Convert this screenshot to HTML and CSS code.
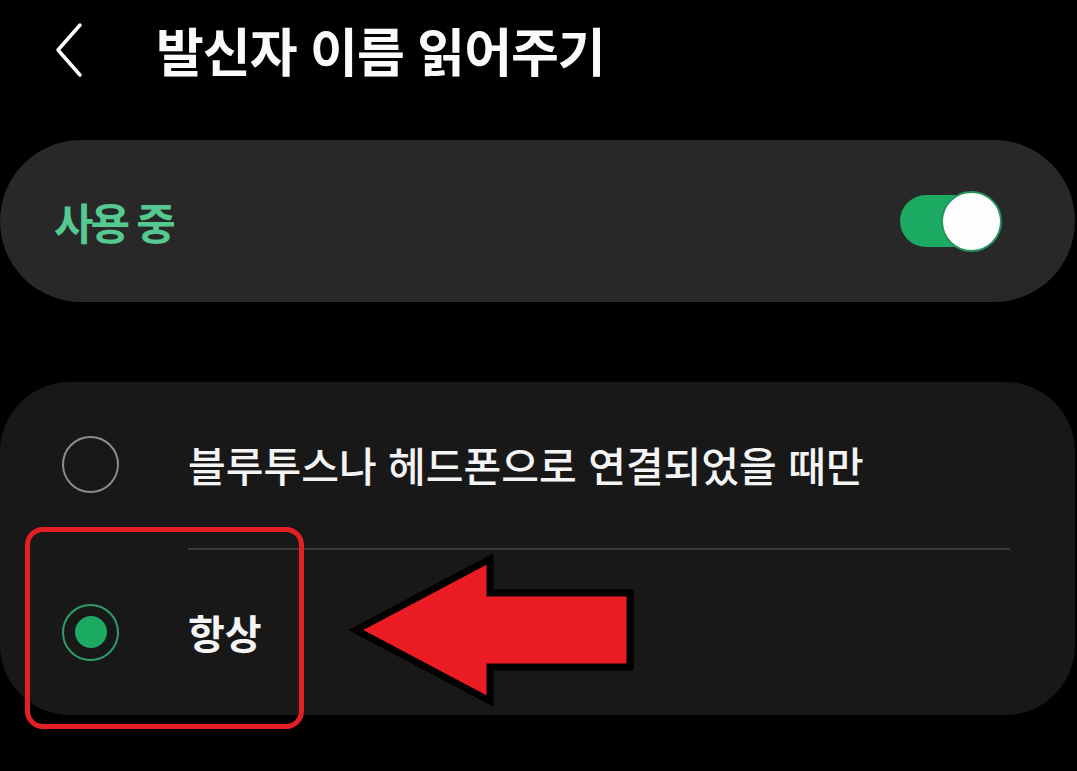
FILE: index.html
```html
<!DOCTYPE html>
<html lang="ko">
<head>
<meta charset="utf-8">
<link rel="stylesheet" href="styles.css">
</head>
<body>
<div class="page">
  <header class="header">
    <svg class="back" width="30" height="56" viewBox="0 0 30 56">
      <polyline points="25,3 3,28 25,53" fill="none" stroke="#fff" stroke-width="3.5" stroke-linecap="round" stroke-linejoin="round"/>
    </svg>
    <h1 class="title">발신자 이름 읽어주기</h1>
  </header>

  <section class="master">
    <span class="master-label">사용 중</span>
    <span class="switch"><span class="knob"></span></span>
  </section>

  <section class="options">
    <div class="option">
      <span class="radio"></span>
      <span class="option-label">블루투스나 헤드폰으로 연결되었을 때만</span>
    </div>
    <div class="divider"></div>
    <div class="option">
      <span class="radio checked"><span class="dot"></span></span>
      <span class="option-label bold">항상</span>
    </div>
  </section>

  <div class="highlight"></div>
  <svg class="arrow" width="300" height="170" viewBox="0 0 300 170">
    <path d="M11,80 L145,9 L145,43 L285,43 L285,117 L145,117 L145,151 Z" fill="#ec1c24" stroke="#000" stroke-width="7" stroke-linejoin="miter"/>
  </svg>
</div>
</body>
</html>
```

FILE: styles.css
```css
* { box-sizing: border-box; }
html, body { margin: 0; padding: 0; background: #000; }
body {
  font-family: "Noto Sans CJK KR", "Noto Sans", sans-serif;
  color: #fff;
  width: 1077px;
  height: 771px;
  overflow: hidden;
}
.page { position: relative; width: 1077px; height: 771px; }

.header {
  display: flex;
  align-items: center;
  height: 100px;
  padding-left: 55px;
}
.back { display: block; }
.title {
  margin: 0 0 0 71px;
  font-size: 52px;
  font-weight: 700;
  letter-spacing: -1px;
  line-height: 1;
  color: #fafafa;
}

.master {
  margin: 40px 2px 0 0;
  height: 162px;
  border-radius: 81px;
  background: #282828;
  display: flex;
  align-items: center;
  justify-content: space-between;
  padding: 0 75px 0 54px;
}
.master-label {
  font-size: 43px;
  font-weight: 700;
  letter-spacing: -3px;
  color: #55c98f;
  line-height: 1;
}
.switch {
  position: relative;
  width: 100px;
  height: 52px;
  border-radius: 26px;
  background: #1caa63;
  display: flex;
  align-items: center;
  justify-content: flex-end;
}
.knob {
  width: 61px;
  height: 61px;
  border-radius: 50%;
  background: #fdfdfd;
  border: 2.5px solid #23935b;
  margin-right: -2px;
}

.options {
  margin: 80px 2px 0 0;
  height: 333px;
  border-radius: 70px;
  background: #181818;
  display: flex;
  flex-direction: column;
}
.option {
  flex: 1;
  display: flex;
  align-items: center;
  padding-left: 62px;
}
.divider {
  height: 2px;
  margin: 0 65px 0 188px;
  background: #3a3a3a;
}
.radio {
  width: 57px;
  height: 57px;
  border-radius: 50%;
  border: 2.5px solid #8c8c8c;
  display: flex;
  align-items: center;
  justify-content: center;
  flex: none;
}
.radio.checked { border-color: #2f9c68; }
.dot {
  width: 32px;
  height: 32px;
  border-radius: 50%;
  background: #1caa63;
}
.option-label {
  margin-left: 69px;
  font-size: 41px;
  font-weight: 500;
  letter-spacing: 0;
  line-height: 1;
  color: #f4f4f4;
}
.option-label.bold { font-weight: 700; font-size: 40px; }

.highlight {
  position: absolute;
  left: 25px;
  top: 527px;
  width: 279px;
  height: 202px;
  border: 5px solid #e31e25;
  border-radius: 18px;
}
.arrow {
  position: absolute;
  left: 345px;
  top: 550px;
}
```
